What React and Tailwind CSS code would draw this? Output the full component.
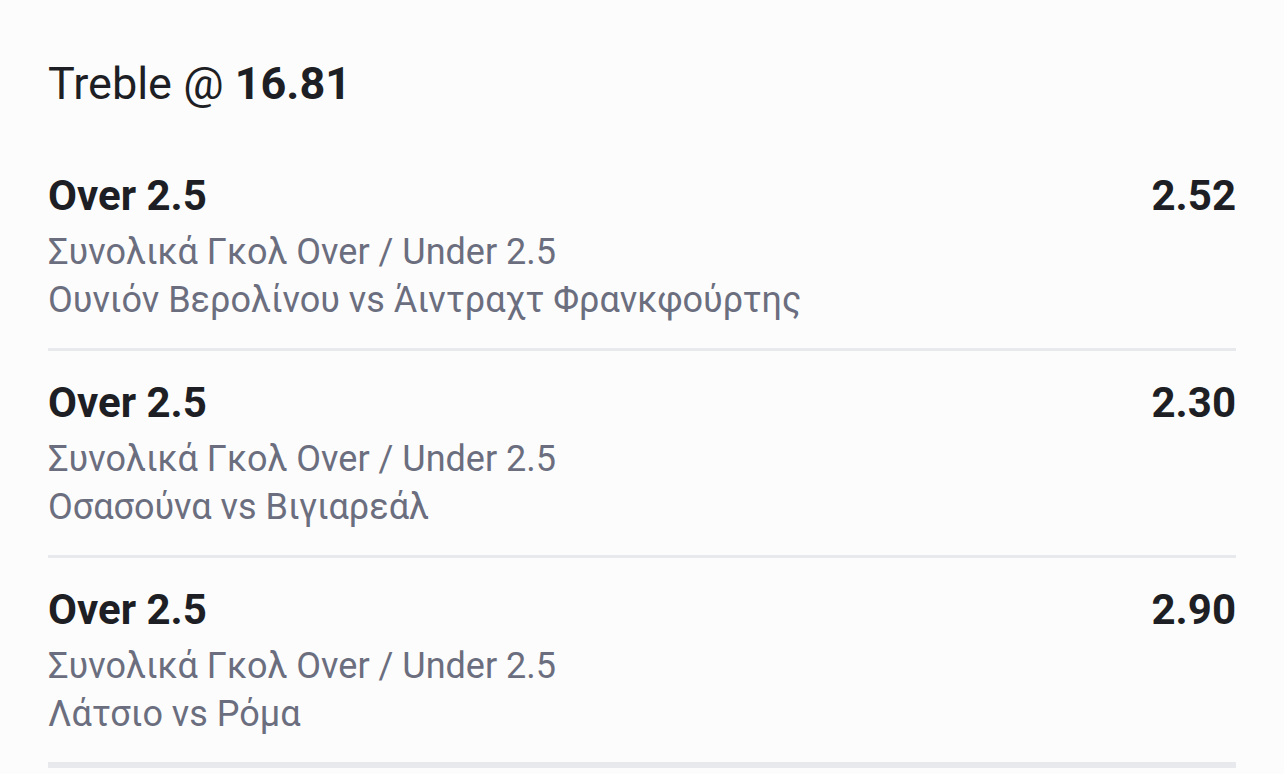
const legs = [
  { pick: 'Over 2.5', odds: '2.52', market: 'Συνολικά Γκολ Over / Under 2.5', match: 'Ουνιόν Βερολίνου vs Άιντραχτ Φρανκφούρτης' },
  { pick: 'Over 2.5', odds: '2.30', market: 'Συνολικά Γκολ Over / Under 2.5', match: 'Οσασούνα vs Βιγιαρεάλ' },
  { pick: 'Over 2.5', odds: '2.90', market: 'Συνολικά Γκολ Over / Under 2.5', match: 'Λάτσιο vs Ρόμα' },
];

export default function App() {
  return (
    <div className="min-h-[774px] bg-[#fcfcfc] px-12 pt-[56px] font-['Roboto','Noto_Sans',sans-serif] text-[#1e1f24]">
      <h1 className="text-[45px] leading-[56px] font-normal">
        Treble @ <span className="font-bold">16.81</span>
      </h1>
      <ul className="mt-[32px]">
        {legs.map((leg, i) => (
          <li
            key={i}
            className={`border-[#e8e9ed] pt-[28px] pb-[24px] ${i === legs.length - 1 ? 'border-b-[6px]' : 'border-b-[3px]'}`}
          >
            <div className="flex items-start justify-between text-[42px] leading-[48px] font-bold">
              <span>{leg.pick}</span>
              <span>{leg.odds}</span>
            </div>
            <div className="mt-2 text-[36px] leading-[48px] text-[#6b6e7e]">
              <p>{leg.market}</p>
              <p>{leg.match}</p>
            </div>
          </li>
        ))}
      </ul>
    </div>
  );
}
